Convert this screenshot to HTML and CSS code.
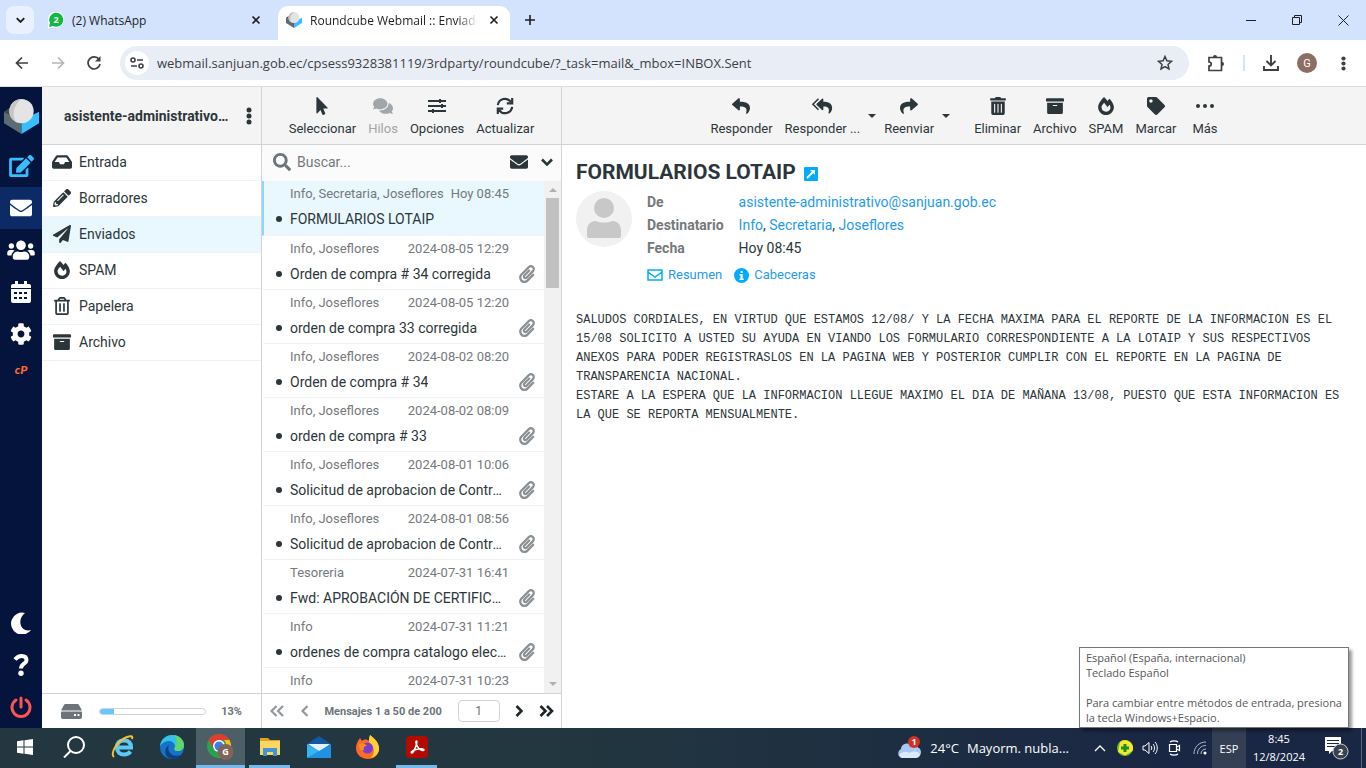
FILE: index.html
```html
<!DOCTYPE html>
<html lang="es">
<head>
    <meta charset="UTF-8">
    <meta name="viewport" content="width=device-width, initial-scale=1.0">
    <title>Roundcube Webmail :: Enviados</title>
    <link rel="stylesheet" href="styles.css">
</head>
<body>
    <!-- Shared icons -->
    <svg class="sprite" aria-hidden="true">
        <symbol id="i-cube" viewBox="0 0 36 36">
            <path fill="#5d6b72" d="M0 13v12l18 11V22z"/>
            <path fill="#37beff" d="M36 13v12L18 36V22z"/>
            <path fill="#3d4a50" d="M0 13l6-4 12 13z"/>
            <circle cx="18" cy="12.500" r="12.500" fill="#e4e4e4"/>
            <path fill="#c6c6c6" d="M18 0a12.500 12.500 0 0 0-6 23.500C8 16 10 6 18 0z"/>
        </symbol>
        <symbol id="i-edit" viewBox="0 0 576 512"><path d="M402.6 83.2l90.2 90.2c3.8 3.8 3.8 10 0 13.8L274.4 405.6l-92.8 10.3c-12.4 1.4-22.9-9.1-21.5-21.5l10.3-92.8L388.8 83.2c3.8-3.8 10-3.8 13.8 0zm162-22.9l-48.8-48.8c-15.2-15.2-39.9-15.2-55.2 0l-35.4 35.4c-3.8 3.8-3.8 10 0 13.8l90.2 90.2c3.8 3.8 10 3.8 13.8 0l35.4-35.4c15.2-15.3 15.2-40 0-55.2zM384 346.2V448H64V128h229.8c3.2 0 6.2-1.300 8.500-3.500l40-40c7.600-7.600 2.200-20.500-8.500-20.500H48C21.500 64 0 85.500 0 112v352c0 26.500 21.500 48 48 48h352c26.500 0 48-21.500 48-48V306.200c0-10.700-12.900-16-20.500-8.500l-40 40c-2.200 2.300-3.500 5.300-3.500 8.500z"/></symbol>
        <symbol id="i-mail" viewBox="0 0 512 512"><path d="M502.3 190.8c3.9-3.1 9.7-.2 9.7 4.7V400c0 26.5-21.5 48-48 48H48c-26.5 0-48-21.5-48-48V195.6c0-5 5.7-7.8 9.7-4.7 22.4 17.4 52.1 39.500 154.100 113.600 21.100 15.400 56.700 47.800 92.200 47.600 35.700.3 72-32.800 92.300-47.600 102-74.100 131.600-96.300 154-113.700zM256 320c23.200.4 56.600-29.200 73.400-41.400 132.700-96.300 142.800-104.700 173.400-128.700 5.800-4.500 9.200-11.500 9.200-18.900v-19c0-26.500-21.500-48-48-48H48c-26.500 0-48 21.500-48 48v19c0 7.400 3.400 14.300 9.200 18.900 30.600 23.900 40.700 32.400 173.400 128.700 16.800 12.200 50.200 41.800 73.400 41.400z"/></symbol>
        <symbol id="i-users" viewBox="0 0 640 512"><path d="M96 224c35.3 0 64-28.7 64-64s-28.7-64-64-64-64 28.7-64 64 28.7 64 64 64zm448 0c35.3 0 64-28.7 64-64s-28.7-64-64-64-64 28.7-64 64 28.7 64 64 64zm32 32h-64c-17.6 0-33.5 7.1-45.1 18.6 40.3 22.1 68.9 62 75.1 109.4h66c17.700 0 32-14.300 32-32v-32c0-35.300-28.700-64-64-64zm-256 0c61.900 0 112-50.100 112-112S381.900 32 320 32 208 82.100 208 144s50.100 112 112 112zm76.800 32h-8.300c-20.800 10-43.900 16-68.500 16s-47.600-6-68.500-16h-8.300C179.600 288 128 339.600 128 403.200V432c0 26.500 21.500 48 48 48h288c26.500 0 48-21.500 48-48v-28.800c0-63.600-51.600-115.200-115.200-115.200zm-223.700-13.400C161.500 263.100 145.600 256 128 256H64c-35.300 0-64 28.700-64 64v32c0 17.700 14.300 32 32 32h65.900c6.300-47.400 34.900-87.300 75.200-109.400z"/></symbol>
        <symbol id="i-calendar" viewBox="0 0 20 22"><path fill-rule="evenodd" d="M4 0h3v3h6V0h3v3h2a2 2 0 0 1 2 2v2H0V5a2 2 0 0 1 2-2h2zM0 8h20v12a2 2 0 0 1-2 2H2a2 2 0 0 1-2-2zm3 3v2h3v-2zm5 0v2h3v-2zm5 0v2h3v-2zM3 16v2h3v-2zm5 0v2h3v-2zm5 0v2h3v-2z"/></symbol>
        <symbol id="i-cog" viewBox="0 0 512 512"><path d="M487.4 315.7l-42.6-24.6c4.3-23.2 4.3-47 0-70.2l42.6-24.6c4.9-2.8 7.1-8.6 5.5-14-11.1-35.6-30-67.8-54.7-94.6-3.8-4.1-10-5.1-14.8-2.3L380.800 110c-17.900-15.400-38.500-27.300-60.800-35.100V25.800c0-5.600-3.900-10.500-9.400-11.700-36.700-8.200-74.300-7.800-109.200 0-5.500 1.200-9.400 6.100-9.400 11.700V75c-22.200 7.900-42.800 19.800-60.800 35.100L88.700 85.500c-4.900-2.800-11-1.900-14.800 2.300-24.700 26.700-43.600 58.900-54.700 94.600-1.700 5.400.6 11.200 5.500 14L67.300 221c-4.300 23.200-4.300 47 0 70.200l-42.600 24.600c-4.900 2.800-7.100 8.600-5.500 14 11.100 35.600 30 67.800 54.700 94.600 3.800 4.100 10 5.100 14.800 2.300l42.600-24.600c17.900 15.400 38.500 27.300 60.800 35.100v49.200c0 5.600 3.900 10.500 9.400 11.700 36.700 8.200 74.300 7.800 109.200 0 5.500-1.200 9.400-6.100 9.400-11.700v-49.200c22.200-7.900 42.800-19.800 60.800-35.100l42.600 24.600c4.900 2.800 11 1.900 14.800-2.300 24.700-26.700 43.600-58.900 54.700-94.600 1.500-5.500-.7-11.300-5.600-14.100zM256 336c-44.100 0-80-35.900-80-80s35.900-80 80-80 80 35.900 80 80-35.900 80-80 80z"/></symbol>
        <symbol id="i-moon" viewBox="0 0 20 22"><path d="M14 1A11 11 0 1 0 20 18C10 21 5 8 14 1z"/></symbol>
        <symbol id="i-help" viewBox="0 0 16 22"><path fill="none" stroke="currentColor" stroke-width="4" d="M2 5.500C4 3 6 2 8.500 2 12 2 13.500 4 13.500 6.300 13.500 10 8 9.500 8 14.500"/><circle cx="8" cy="19.300" r="2.700"/></symbol>
        <symbol id="i-power" viewBox="0 0 22 22"><path fill="none" stroke="currentColor" stroke-width="3" stroke-linecap="round" d="M11 2v9M6 4a9 9 0 1 0 10 0"/></symbol>
        <symbol id="i-inbox" viewBox="0 0 576 512"><path d="M567.938 243.908L462.25 85.374A48.003 48.003 0 0 0 422.311 64H153.689a48 48 0 0 0-39.938 21.374L8.062 243.908A47.994 47.994 0 0 0 0 270.533V400c0 26.510 21.490 48 48 48h480c26.510 0 48-21.490 48-48V270.533a47.994 47.994 0 0 0-8.062-26.625zM162.252 128h251.497l85.333 128H376l-32 64H232l-32-64H76.918l85.334-128z"/></symbol>
        <symbol id="i-pencil" viewBox="0 0 512 512"><path d="M497.9 142.1l-46.1 46.1c-4.7 4.7-12.3 4.7-17 0l-111-111c-4.7-4.7-4.7-12.3 0-17l46.1-46.1c18.7-18.7 49.1-18.7 67.9 0l60.1 60.1c18.8 18.7 18.8 49.1 0 67.900zM284.200 99.800L21.600 362.400.4 483.900c-2.900 16.400 11.400 30.600 27.800 27.800l121.500-21.300 262.600-262.600c4.700-4.700 4.700-12.300 0-17l-111-111c-4.800-4.700-12.400-4.700-17.100 0zM124.100 339.900c-5.500-5.500-5.500-14.300 0-19.800l154-154c5.500-5.500 14.300-5.500 19.800 0s5.500 14.300 0 19.800l-154 154c-5.500 5.500-14.300 5.500-19.800 0zM88 424h48v36.300l-64.500 11.300-31.100-31.100L51.700 376H88v48z"/></symbol>
        <symbol id="i-plane" viewBox="0 0 512 512"><path d="M476 3.2L12.5 270.600c-18.100 10.400-15.800 35.600 2.200 43.200L121 358.400l287.300-253.200c5.500-4.900 13.300 2.600 8.600 8.300L176 407v80.500c0 23.600 28.500 32.900 42.500 15.800L282 426l124.600 52.200c14.200 6 30.400-2.900 33-18.200l72-432C515 7.800 493.300-6.800 476 3.200z"/></symbol>
        <symbol id="i-fire" viewBox="0 0 448 512"><path d="M323.560 51.200c-20.800 19.300-39.580 39.590-56.220 59.970C240.080 73.620 206.280 35.530 168 0 69.740 91.170 0 209.960 0 281.600 0 408.850 100.290 512 224 512s224-103.150 224-230.400c0-53.270-51.980-163.140-124.440-230.400zm-19.470 340.650C282.430 407.010 255.720 416 226.860 416 154.710 416 96 368.260 96 290.750c0-38.610 24.310-72.630 72.790-130.750 6.930 7.980 98.830 125.340 98.830 125.340l58.630-66.880c4.140 6.850 7.910 13.550 11.270 19.970 27.350 52.190 15.810 118.970-33.430 153.420z"/></symbol>
        <symbol id="i-trash-o" viewBox="0 0 448 512"><path d="M268 416h24a12 12 0 0 0 12-12V188a12 12 0 0 0-12-12h-24a12 12 0 0 0-12 12v216a12 12 0 0 0 12 12zM432 80h-82.410l-34-56.700A48 48 0 0 0 274.410 0H173.590a48 48 0 0 0-41.160 23.300L98.410 80H16A16 16 0 0 0 0 96v16a16 16 0 0 0 16 16h16v336a48 48 0 0 0 48 48h288a48 48 0 0 0 48-48V128h16a16 16 0 0 0 16-16V96a16 16 0 0 0-16-16zM171.840 50.910A6 6 0 0 1 177 48h94a6 6 0 0 1 5.150 2.910L293.610 80H154.390zM368 464H80V128h288zm-212-48h24a12 12 0 0 0 12-12V188a12 12 0 0 0-12-12h-24a12 12 0 0 0-12 12v216a12 12 0 0 0 12 12z"/></symbol>
        <symbol id="i-trash" viewBox="0 0 448 512"><path d="M32 464a48 48 0 0 0 48 48h288a48 48 0 0 0 48-48V128H32zm272-256a16 16 0 0 1 32 0v224a16 16 0 0 1-32 0zm-96 0a16 16 0 0 1 32 0v224a16 16 0 0 1-32 0zm-96 0a16 16 0 0 1 32 0v224a16 16 0 0 1-32 0zM432 32H312l-9.400-18.700A24 24 0 0 0 281.100 0H166.800a23.720 23.720 0 0 0-21.400 13.300L136 32H16A16 16 0 0 0 0 48v32a16 16 0 0 0 16 16h416a16 16 0 0 0 16-16V48a16 16 0 0 0-16-16z"/></symbol>
        <symbol id="i-archive" viewBox="0 0 512 512"><path d="M32 448c0 17.700 14.300 32 32 32h384c17.700 0 32-14.300 32-32V160H32v288zm160-212c0-6.600 5.400-12 12-12h104c6.600 0 12 5.400 12 12v8c0 6.600-5.400 12-12 12H204c-6.600 0-12-5.400-12-12v-8zM480 32H32C14.300 32 0 46.300 0 64v48c0 8.800 7.200 16 16 16h480c8.800 0 16-7.200 16-16V64c0-17.700-14.300-32-32-32z"/></symbol>
        <symbol id="i-tag" viewBox="0 0 512 512"><path d="M0 252.118V48C0 21.490 21.490 0 48 0h204.118a48 48 0 0 1 33.941 14.059l211.882 211.882c18.745 18.745 18.745 49.137 0 67.882L293.823 497.941c-18.745 18.745-49.137 18.745-67.882 0L14.059 286.059A48 48 0 0 1 0 252.118zM112 64c-26.510 0-48 21.490-48 48s21.490 48 48 48 48-21.490 48-48-21.490-48-48-48z"/></symbol>
        <symbol id="i-search" viewBox="0 0 512 512"><path d="M505 442.700L405.300 343c-4.500-4.500-10.600-7-17-7H372c27.600-35.300 44-79.700 44-128C416 93.100 322.900 0 208 0S0 93.100 0 208s93.100 208 208 208c48.300 0 92.700-16.400 128-44v16.300c0 6.400 2.500 12.500 7 17l99.700 99.700c9.400 9.400 24.600 9.400 33.900 0l28.300-28.300c9.400-9.400 9.400-24.600.1-34zM208 336c-70.700 0-128-57.200-128-128 0-70.700 57.200-128 128-128 70.700 0 128 57.200 128 128 0 70.700-57.200 128-128 128z"/></symbol>
        <symbol id="i-comments" viewBox="0 0 576 512"><path d="M416 192c0-88.400-93.100-160-208-160S0 103.600 0 192c0 34.300 14.100 65.900 38 92-13.400 30.200-35.500 54.200-35.800 54.500-2.200 2.300-2.800 5.700-1.500 8.700S4.800 352 8 352c36.600 0 66.900-12.300 88.700-25 32.200 15.700 70.300 25 111.300 25 114.900 0 208-71.600 208-160zm122 220c23.900-26 38-57.700 38-92 0-66.900-53.500-124.200-129.300-148.100.9 6.600 1.300 13.300 1.300 20.100 0 105.900-107.700 192-240 192-10.800 0-21.300-.8-31.700-1.900C207.800 439.600 281.800 480 368 480c41 0 79.100-9.200 111.300-25 21.800 12.700 52.100 25 88.700 25 3.200 0 6.100-1.900 7.300-4.800 1.300-2.900.7-6.300-1.500-8.700-.3-.3-22.400-24.200-35.800-54.500z"/></symbol>
        <symbol id="i-pointer" viewBox="0 0 320 512"><path d="M302.189 329.126H196.105l55.831 135.993c3.889 9.428-.555 19.999-9.444 23.999l-49.165 21.427c-9.165 4-19.443-.571-23.332-9.714l-53.053-129.136-86.664 89.138C18.729 472.710 0 463.554 0 447.977V18.299C0 1.899 19.921-6.096 30.277 5.443l284.412 292.542c11.472 11.179 3.007 31.141-12.500 31.141z"/></symbol>
        <symbol id="i-sliders" viewBox="0 0 20 18"><path d="M1 3h18v2H1zM1 8h18v2H1zM1 13h18v2H1zM12 2h2v4h-2zM14 7h2v4h-2zM5 12h2v4H5z"/></symbol>
        <symbol id="i-sync" viewBox="0 0 20 20"><path fill="none" stroke="currentColor" stroke-width="2.400" d="M2 9a8 8 0 0 1 14.500-3.500M18 11a8 8 0 0 1-14.500 3.500M18 1v6h-6M2 19v-6h6"/></symbol>
        <symbol id="i-clip" viewBox="0 0 448 512"><path d="M43.246 466.142c-58.430-60.289-57.341-157.511 1.386-217.581L254.392 34c44.316-45.332 116.351-45.336 160.671 0 43.890 44.894 43.943 117.329 0 162.276L232.214 383.128c-29.855 30.537-78.633 30.111-107.982-.998-28.275-29.970-27.368-77.473 1.452-106.953l143.743-146.835c6.182-6.314 16.312-6.422 22.626-.241l22.861 22.379c6.315 6.182 6.422 16.312.241 22.626L171.427 319.927c-4.932 5.045-5.236 13.428-.648 18.292 4.372 4.634 11.245 4.711 15.688.165l182.849-186.851c19.613-20.062 19.613-52.725-.011-72.798-19.189-19.627-49.957-19.637-69.154 0L90.390 293.295c-34.763 35.560-35.299 93.120-1.191 128.313 34.010 35.093 88.985 35.137 123.058.286l172.060-175.999c6.177-6.319 16.307-6.433 22.626-.256l22.877 22.364c6.319 6.177 6.434 16.307.256 22.626l-172.060 175.998c-59.576 60.938-155.943 60.216-214.770-.485z"/></symbol>
        <symbol id="i-reply" viewBox="0 0 512 512"><path d="M8.309 189.836L184.313 37.851C199.719 24.546 224 35.347 224 56.015v80.053c160.629 1.839 288 34.032 288 186.258 0 61.441-39.581 122.309-83.333 154.132-13.653 9.931-33.111-2.533-28.077-18.631 45.344-145.012-21.507-183.510-176.590-185.742V360c0 20.700-24.300 31.453-39.687 18.164l-176.004-152c-11.071-9.562-11.086-26.753 0-36.328z"/></symbol>
        <symbol id="i-reply-all" viewBox="0 0 576 512"><path d="M136 190L290 50c14-12 36-3 36 16v72c140 4 250 40 250 180 0 60-36 116-76 148-14 10-32-3-27-18 40-134-14-174-147-178v82c0 20-22 30-36 18L136 226c-10-10-10-26 0-36z"/><path fill="none" stroke="currentColor" stroke-width="44" d="M188 50L30 206l158 156"/></symbol>
        <symbol id="i-ellipsis" viewBox="0 0 18 4"><circle cx="2" cy="2" r="2"/><circle cx="9" cy="2" r="2"/><circle cx="16" cy="2" r="2"/></symbol>
        <symbol id="i-dots" viewBox="0 0 6 18"><circle cx="3" cy="3" r="2.500"/><circle cx="3" cy="9" r="2.500"/><circle cx="3" cy="15" r="2.500"/></symbol>
        <symbol id="i-caret" viewBox="0 0 8 4"><path d="M0 0h8L4 4z"/></symbol>
        <symbol id="i-chev-down" viewBox="0 0 12 8"><path fill="none" stroke="currentColor" stroke-width="2.600" d="M1 1.500l5 5 5-5"/></symbol>
        <symbol id="i-chev-right" viewBox="0 0 8 12"><path fill="none" stroke="currentColor" stroke-width="2.600" d="M1.500 1l5 5-5 5"/></symbol>
        <symbol id="i-chevs-right" viewBox="0 0 15 12"><path fill="none" stroke="currentColor" stroke-width="2.600" d="M1.500 1l5 5-5 5M8 1l5 5-5 5"/></symbol>
        <symbol id="i-chev-left" viewBox="0 0 8 12"><path fill="none" stroke="currentColor" stroke-width="2.200" d="M6.500 1l-5 5 5 5"/></symbol>
        <symbol id="i-chevs-left" viewBox="0 0 15 12"><path fill="none" stroke="currentColor" stroke-width="2.200" d="M6.500 1l-5 5 5 5M13 1L8 6l5 5"/></symbol>
        <symbol id="i-hdd" viewBox="0 0 21 15"><path fill-rule="evenodd" d="M5 0h11a2 2 0 0 1 2 1l3 5.500H0L3 1a2 2 0 0 1 2-1zM0 8.500A1 1 0 0 1 1 7.500h19a1 1 0 0 1 1 1V13a2 2 0 0 1-2 2H2a2 2 0 0 1-2-2zM13 10v2h2v-2zm3.500 0v2h2v-2z"/></symbol>
        <symbol id="i-close" viewBox="0 0 10 10"><path fill="none" stroke="currentColor" stroke-width="1.600" d="M1.500 1.500l7 7M8.500 1.500l-7 7"/></symbol>
        <symbol id="i-arrow" viewBox="0 0 14 14"><path fill="none" stroke="currentColor" stroke-width="1.700" d="M13 7H2M7 1.500L1.500 7 7 12.500"/></symbol>
    </svg>

    <!-- Browser tabs -->
    <header class="tab-strip">
        <button class="tab-search" aria-label="Buscar pestañas"><svg width="9" height="6"><use href="#i-chev-down"/></svg></button>
        <div class="tab">
            <svg width="16" height="16" viewBox="0 0 16 16"><path fill="#fff" d="M0 16V7a8 8 0 1 1 8 8.500z"/><path fill="#12b83f" d="M1 15l1-4a7 7 0 1 1 3 3z"/><text x="8" y="11" text-anchor="middle" class="badge-text">2</text></svg>
            <span class="tab-title">(2) WhatsApp</span>
            <button class="tab-close" aria-label="Cerrar"><svg width="10" height="10"><use href="#i-close"/></svg></button>
        </div>
        <div class="tab active">
            <svg width="16" height="16"><use href="#i-cube"/></svg>
            <span class="tab-title">Roundcube Webmail :: Enviados</span>
            <button class="tab-close" aria-label="Cerrar"><svg width="10" height="10"><use href="#i-close"/></svg></button>
        </div>
        <button class="tab-new" aria-label="Nueva pestaña"><svg width="12" height="12" viewBox="0 0 12 12"><path fill="none" stroke="currentColor" stroke-width="1.600" d="M6 1v10M1 6h10"/></svg></button>
        <div class="window-buttons">
            <button aria-label="Minimizar"><svg width="10" height="10" viewBox="0 0 10 10"><path stroke="currentColor" d="M0 5.500h10"/></svg></button>
            <button aria-label="Restaurar"><svg width="10" height="10" viewBox="0 0 10 10"><path fill="none" stroke="currentColor" d="M.5 2.500h7v7h-7zM2.500 2.500v-2h7v7h-2"/></svg></button>
            <button aria-label="Cerrar ventana"><svg width="11" height="11" viewBox="0 0 11 11"><path fill="none" stroke="currentColor" d="M.5.5l10 10M10.500.5l-10 10"/></svg></button>
        </div>
    </header>

    <!-- Browser toolbar -->
    <div class="address-row">
        <button class="nav-btn" aria-label="Atrás"><svg width="14" height="14"><use href="#i-arrow"/></svg></button>
        <button class="nav-btn forward" aria-label="Adelante" disabled><svg width="14" height="14"><use href="#i-arrow"/></svg></button>
        <button class="nav-btn" aria-label="Recargar"><svg width="14" height="14" viewBox="0 0 14 14"><path fill="none" stroke="currentColor" stroke-width="1.700" d="M12 3.500A6 6 0 1 0 13 8"/><path d="M13.500 0v5.500H8z"/></svg></button>
        <div class="omnibox">
            <button class="site-info" aria-label="Información del sitio"><svg width="14" height="12" viewBox="0 0 14 12"><g fill="none" stroke="currentColor" stroke-width="1.600"><circle cx="3" cy="3" r="2"/><path d="M7 3h6M1 9h6"/><circle cx="11" cy="9" r="2"/></g></svg></button>
            <input class="url" type="text" aria-label="Dirección" value="webmail.sanjuan.gob.ec/cpsess9328381119/3rdparty/roundcube/?_task=mail&amp;_mbox=INBOX.Sent">
            <button class="star" aria-label="Favorito"><svg width="16" height="16" viewBox="0 0 16 16"><path fill="none" stroke="currentColor" stroke-width="1.500" d="M8 1.500l1.900 4.300 4.600.5-3.500 3.100 1 4.600-4-2.400-4 2.400 1-4.600L1.500 6.300l4.600-.5z"/></svg></button>
        </div>
        <div class="browser-actions">
            <button aria-label="Extensiones"><svg width="18" height="18" viewBox="0 0 18 18"><path fill="none" stroke="currentColor" stroke-width="1.700" d="M2 3.500h12.500v13H2v-4.500c3 0 3-4 0-4z"/><path d="M6 3a2 2 0 0 1 4 0zM15 8a2 2 0 0 1 0 4z"/></svg></button>
            <span class="divider"></span>
            <button aria-label="Descargas"><svg width="16" height="16" viewBox="0 0 16 16"><path fill="none" stroke="currentColor" stroke-width="1.900" d="M8 0v10M3.500 6L8 10.500 12.500 6M1 11v4h14v-4"/></svg></button>
            <button class="profile" aria-label="Perfil">G</button>
            <button aria-label="Menú"><svg width="5" height="15"><use href="#i-dots"/></svg></button>
        </div>
    </div>

    <!-- Webmail -->
    <div class="webmail">
        <nav class="taskmenu">
            <a href="#" class="logo" aria-label="Roundcube"><svg width="35" height="35"><use href="#i-cube"/></svg></a>
            <a href="#" class="compose" aria-label="Redactar"><svg width="25" height="22"><use href="#i-edit"/></svg></a>
            <a href="#" class="selected" aria-label="Correo"><svg width="22" height="22"><use href="#i-mail"/></svg></a>
            <a href="#" aria-label="Contactos"><svg width="28" height="22"><use href="#i-users"/></svg></a>
            <a href="#" aria-label="Calendario"><svg width="20" height="22"><use href="#i-calendar"/></svg></a>
            <a href="#" aria-label="Configuración"><svg width="22" height="22"><use href="#i-cog"/></svg></a>
            <a href="#" class="cpanel" aria-label="cPanel">cP</a>
            <span class="spacer"></span>
            <a href="#" aria-label="Modo oscuro"><svg width="20" height="22"><use href="#i-moon"/></svg></a>
            <a href="#" aria-label="Ayuda"><svg width="16" height="22"><use href="#i-help"/></svg></a>
            <a href="#" class="logout" aria-label="Salir"><svg width="22" height="22"><use href="#i-power"/></svg></a>
        </nav>

        <aside class="folders">
            <div class="pane-header account">
                <span class="account-name">asistente-administrativo@sanjuan.gob.ec</span>
                <button aria-label="Acciones de carpeta"><svg width="6" height="18"><use href="#i-dots"/></svg></button>
            </div>
            <ul class="folder-list">
                <li><a href="#"><svg width="20" height="18"><use href="#i-inbox"/></svg>Entrada</a></li>
                <li><a href="#"><svg width="20" height="18"><use href="#i-pencil"/></svg>Borradores</a></li>
                <li class="selected"><a href="#"><svg width="20" height="18"><use href="#i-plane"/></svg>Enviados</a></li>
                <li><a href="#"><svg width="20" height="18"><use href="#i-fire"/></svg>SPAM</a></li>
                <li><a href="#"><svg width="20" height="18"><use href="#i-trash-o"/></svg>Papelera</a></li>
                <li><a href="#"><svg width="20" height="18"><use href="#i-archive"/></svg>Archivo</a></li>
            </ul>
            <div class="pane-footer quota">
                <svg width="21" height="15"><use href="#i-hdd"/></svg>
                <div class="quota-bar"><div class="quota-value" style="width: 13%"></div></div>
                <span>13%</span>
            </div>
        </aside>

        <section class="messages">
            <div class="pane-header toolbar">
                <button><svg width="20" height="18"><use href="#i-pointer"/></svg>Seleccionar</button>
                <button disabled><svg width="20" height="18"><use href="#i-comments"/></svg>Hilos</button>
                <button><svg width="20" height="18"><use href="#i-sliders"/></svg>Opciones</button>
                <button><svg width="20" height="18"><use href="#i-sync"/></svg>Actualizar</button>
            </div>
            <div class="searchbar">
                <svg width="18" height="18"><use href="#i-search"/></svg>
                <input type="text" placeholder="Buscar..." aria-label="Buscar">
                <button aria-label="No leídos"><svg width="18" height="18"><use href="#i-mail"/></svg></button>
                <button aria-label="Opciones de búsqueda"><svg width="12" height="8"><use href="#i-chev-down"/></svg></button>
            </div>
            <div class="list-scroller">
                <ul class="message-list">
                    <li class="selected">
                        <div class="meta"><span>Info, Secretaria, Joseflores</span><time>Hoy 08:45</time></div>
                        <a class="subject" href="#"><span>FORMULARIOS LOTAIP</span></a>
                    </li>
                    <li>
                        <div class="meta"><span>Info, Joseflores</span><time>2024-08-05 12:29</time></div>
                        <a class="subject" href="#"><span>Orden de compra # 34 corregida</span></a>
                        <svg class="clip"><use href="#i-clip"/></svg>
                    </li>
                    <li>
                        <div class="meta"><span>Info, Joseflores</span><time>2024-08-05 12:20</time></div>
                        <a class="subject" href="#"><span>orden de compra 33 corregida</span></a>
                        <svg class="clip"><use href="#i-clip"/></svg>
                    </li>
                    <li>
                        <div class="meta"><span>Info, Joseflores</span><time>2024-08-02 08:20</time></div>
                        <a class="subject" href="#"><span>Orden de compra # 34</span></a>
                        <svg class="clip"><use href="#i-clip"/></svg>
                    </li>
                    <li>
                        <div class="meta"><span>Info, Joseflores</span><time>2024-08-02 08:09</time></div>
                        <a class="subject" href="#"><span>orden de compra # 33</span></a>
                        <svg class="clip"><use href="#i-clip"/></svg>
                    </li>
                    <li>
                        <div class="meta"><span>Info, Joseflores</span><time>2024-08-01 10:06</time></div>
                        <a class="subject" href="#"><span>Solicitud de aprobacion de Contratacion</span></a>
                        <svg class="clip"><use href="#i-clip"/></svg>
                    </li>
                    <li>
                        <div class="meta"><span>Info, Joseflores</span><time>2024-08-01 08:56</time></div>
                        <a class="subject" href="#"><span>Solicitud de aprobacion de Contratacion</span></a>
                        <svg class="clip"><use href="#i-clip"/></svg>
                    </li>
                    <li>
                        <div class="meta"><span>Tesoreria</span><time>2024-07-31 16:41</time></div>
                        <a class="subject" href="#"><span>Fwd: APROBACIÓN DE CERTIFICACION</span></a>
                        <svg class="clip"><use href="#i-clip"/></svg>
                    </li>
                    <li>
                        <div class="meta"><span>Info</span><time>2024-07-31 11:21</time></div>
                        <a class="subject" href="#"><span>ordenes de compra catalogo electronico</span></a>
                        <svg class="clip"><use href="#i-clip"/></svg>
                    </li>
                    <li>
                        <div class="meta"><span>Info</span><time>2024-07-31 10:23</time></div>
                    </li>
                </ul>
                <div class="scrollbar">
                    <svg class="scroll-up" width="8" height="4"><use href="#i-caret"/></svg>
                    <div class="scroll-thumb"></div>
                    <svg width="8" height="4"><use href="#i-caret"/></svg>
                </div>
            </div>
            <div class="pane-footer pager">
                <button disabled aria-label="Primera"><svg width="15" height="12"><use href="#i-chevs-left"/></svg></button>
                <button disabled aria-label="Anterior"><svg width="8" height="12"><use href="#i-chev-left"/></svg></button>
                <span class="count">Mensajes 1 a 50 de 200</span>
                <input type="text" value="1" aria-label="Página">
                <button aria-label="Siguiente"><svg width="8" height="12"><use href="#i-chev-right"/></svg></button>
                <button aria-label="Última"><svg width="15" height="12"><use href="#i-chevs-right"/></svg></button>
            </div>
        </section>

        <main class="reader">
            <div class="pane-header toolbar">
                <button><svg width="20" height="18"><use href="#i-reply"/></svg>Responder</button>
                <button><svg width="22" height="18"><use href="#i-reply-all"/></svg>Responder ...</button>
                <button class="drop" aria-label="Más respuestas"><svg width="8" height="4"><use href="#i-caret"/></svg></button>
                <button><svg class="flip" width="20" height="18"><use href="#i-reply"/></svg>Reenviar</button>
                <button class="drop" aria-label="Más reenvíos"><svg width="8" height="4"><use href="#i-caret"/></svg></button>
                <button class="group"><svg width="20" height="18"><use href="#i-trash"/></svg>Eliminar</button>
                <button><svg width="20" height="18"><use href="#i-archive"/></svg>Archivo</button>
                <button><svg width="20" height="18"><use href="#i-fire"/></svg>SPAM</button>
                <button><svg width="20" height="18"><use href="#i-tag"/></svg>Marcar</button>
                <button class="more"><svg width="18" height="18"><use href="#i-ellipsis"/></svg>Más</button>
            </div>
            <article class="message">
                <h1>FORMULARIOS LOTAIP
                    <a href="#" aria-label="Abrir en ventana nueva"><svg width="14" height="14" viewBox="0 0 14 14"><rect width="14" height="14" rx="1"/><path fill="none" stroke="#fff" stroke-width="2" d="M3 11l6-6"/><path fill="#fff" d="M6 3h5v5z"/></svg></a>
                </h1>
                <div class="message-info">
                    <svg class="avatar" viewBox="0 0 56 56"><circle cx="28" cy="28" r="28" fill="#f1f1f1"/><circle cx="28" cy="17" r="10" fill="#c8c8c8"/><path fill="#c8c8c8" d="M11 45v-5c0-7 4-10 9-10 5 2 11 2 16 0 5 0 9 3 9 10v5a2 2 0 0 1-2 2H13a2 2 0 0 1-2-2z"/></svg>
                    <div>
                        <table class="fields">
                            <tr><th scope="row">De</th><td><a href="#">asistente-administrativo@sanjuan.gob.ec</a></td></tr>
                            <tr><th scope="row">Destinatario</th><td><a href="#">Info</a>, <a href="#">Secretaria</a>, <a href="#">Joseflores</a></td></tr>
                            <tr><th scope="row">Fecha</th><td>Hoy 08:45</td></tr>
                        </table>
                        <div class="header-links">
                            <a href="#"><svg width="16" height="12" viewBox="0 0 16 12"><path fill="none" stroke="currentColor" stroke-width="1.500" d="M1 1h14v10H1zM1 3l7 5 7-5"/></svg>Resumen</a>
                            <a href="#"><svg width="15" height="15" viewBox="0 0 15 15"><circle cx="7.500" cy="7.500" r="7.500"/><path fill="#fff" d="M6.500 3h2.200v2H6.500zM5.500 6h3.200v4.500h1V12h-4.200v-1.500h1v-3h-1z"/></svg>Cabeceras</a>
                        </div>
                    </div>
                </div>
                <div class="message-body">
                    <p>SALUDOS CORDIALES, EN VIRTUD QUE ESTAMOS 12/08/ Y LA FECHA MAXIMA PARA EL REPORTE DE LA INFORMACION ES EL 15/08 SOLICITO A USTED SU AYUDA EN VIANDO LOS FORMULARIO CORRESPONDIENTE A LA LOTAIP Y SUS RESPECTIVOS ANEXOS PARA PODER REGISTRASLOS EN LA PAGINA WEB Y POSTERIOR CUMPLIR CON EL REPORTE EN LA PAGINA DE TRANSPARENCIA NACIONAL.</p>
                    <p>ESTARE A LA ESPERA QUE LA INFORMACION LLEGUE MAXIMO EL DIA DE MAÑANA 13/08, PUESTO QUE ESTA INFORMACION ES LA QUE SE REPORTA MENSUALMENTE.</p>
                </div>
            </article>
        </main>
    </div>

    <!-- Windows taskbar -->
    <footer class="taskbar">
        <div class="apps">
            <button aria-label="Inicio"><svg width="16" height="16" viewBox="0 0 16 16"><path fill="#fff" d="M0 2.200l6.500-.9v6.200H0zM7.500 1.200L16 0v7.500H7.500zM0 8.500h6.500v6.200L0 13.800zM7.500 8.500H16V16l-8.500-1.200z"/></svg></button>
            <button aria-label="Buscar"><svg width="22" height="22" viewBox="0 0 22 22"><g fill="none" stroke="#fff" stroke-width="2"><circle cx="13" cy="9" r="8"/><path d="M7.500 15L1 21.500"/></g></svg></button>
            <button aria-label="Internet Explorer"><svg width="24" height="24" viewBox="0 0 24 24"><path fill="none" stroke="#5cc8f5" stroke-width="4" d="M6 12.500h14C20 8 17.500 5.500 13 5.500S6 8 6 12.500 9 19.500 13 19.500c3 0 5-1 6.500-3"/><path fill="none" stroke="#f2c230" stroke-width="2" d="M3 22C-1 18 6 6 16 2c4-1.500 6-1 5 2"/></svg></button>
            <button aria-label="Edge"><svg width="24" height="24" viewBox="0 0 24 24"><circle cx="12" cy="12" r="12" fill="#1674c8"/><path fill="#35c1e8" d="M0 11C1 4 6 0 12 0c7 0 12 5 12 10 0 4-3 6-6 6-4 0-4-2-3-4 0-4-3-6-6-6-4 0-7 2-9 5z"/><path fill="#61d66b" d="M14 0c6 1 10 5 10 10 0 4-3 6-6 6-4 0-4-2-3-4 3-3 2-8-1-12z"/><path fill="#0d3f86" d="M9 10c-3 6 3 13 12 10-3 4-8 5-12 3-5-3-5-10 0-13z"/></svg></button>
            <button class="current" aria-label="Chrome"><svg width="27" height="26" viewBox="0 0 27 26"><circle cx="12" cy="12" r="12" fill="#2ba24c"/><path fill="#e33b2e" d="M1.600 6A12 12 0 0 1 22.400 6H12a6 6 0 0 0-5 9z"/><path fill="#fbc116" d="M22.400 6A12 12 0 0 1 12 24l5-9a6 6 0 0 0 0-9z"/><circle cx="12" cy="12" r="6" fill="#fff"/><circle cx="12" cy="12" r="4.500" fill="#3b7ded"/><circle cx="18.500" cy="18" r="8" fill="#80645a"/><text x="18.500" y="21" text-anchor="middle" class="badge-text">G</text></svg></button>
            <button class="open" aria-label="Explorador de archivos"><svg width="22" height="20" viewBox="0 0 22 20"><path fill="#e6a317" d="M1 1h8l2 2h10v6H1z"/><path fill="#fbd667" d="M1 4h20v14H1z"/><path fill="#4295d1" d="M4 19v-8h14v8h-4v-4H8v4z"/></svg></button>
            <button aria-label="Correo"><svg width="24" height="22" viewBox="0 0 24 22"><path fill="#1259a5" d="M0 8l12-8 12 8v6H0z"/><path fill="#e3f2fc" d="M1 8h22l-10 8z"/><path fill="#36b5f0" d="M0 8l14 8-14 6z"/><path fill="#1f93e0" d="M24 8v14H0z"/></svg></button>
            <button aria-label="Firefox"><svg width="24" height="24" viewBox="0 0 24 24"><path fill="#ff6b26" d="M2 6l2-3 2 3c2-2 5-2 7 0l1-6c4 3 9 7 9 14 0 6-5 10-11 10S0 20 0 13c0-3 1-5 2-7z"/><path fill="#ffcf35" d="M14 0c4 3 10 8 9 15-1 4-4 7-8 8 4-5 4-11-1-14-2-3-1-6 0-9z"/><circle cx="11.500" cy="13" r="5.500" fill="#7a3dcc"/><path fill="#ff8c21" d="M3 9c3-1 6-1 8 2-3 0-4 2-3 4-3 1-6-2-5-6z"/></svg></button>
            <button class="open" aria-label="Adobe Acrobat"><svg width="22" height="22" viewBox="0 0 22 22"><rect width="22" height="22" rx="4" fill="#b30b00"/><path fill="none" stroke="#fff" stroke-width="1.500" d="M10.500 5c-1.500 0 0 5 2.500 7.500s5 2.500 5 1.200c0-1.700-10-.7-12.500 2-1 1.500 1 2 2-.2C9 13 12 5 10.500 5z"/></svg></button>
        </div>
        <div class="tray">
            <button class="weather">
                <svg width="26" height="24" viewBox="0 0 26 24"><path fill="#a9c8f4" d="M5 22a5 5 0 0 1 0-9c0-6 9-8 12-2 5-1 8 2 8 5s-2 6-5 6z"/><path fill="#dceafd" d="M3 19c4-5 9-3 11-2 3-2 7-2 10 1-1 3-3 4-5 4H6z"/><circle cx="18" cy="6" r="6" fill="#d13125"/><text x="18" y="9" text-anchor="middle" class="badge-text">1</text></svg>
                <span>24°C</span><span>Mayorm. nubla...</span>
            </button>
            <button aria-label="Iconos ocultos"><svg width="12" height="8" viewBox="0 0 12 8"><path fill="none" stroke="#fff" stroke-width="1.300" d="M1 7l5-5 5 5"/></svg></button>
            <button aria-label="Antivirus"><svg width="16" height="16" viewBox="0 0 16 16"><circle cx="8" cy="8" r="8" fill="#5bbd2d"/><path fill="#f5e82d" d="M3 2a8 8 0 0 1 12.500 9L8 15.500 1 12z"/><path fill="#1e8c2c" d="M6.500 4h3v2.500H12v3H9.500V12h-3V9.500H4v-3h2.500z"/></svg></button>
            <button aria-label="Volumen"><svg width="16" height="14" viewBox="0 0 16 14"><path fill="none" stroke="#fff" d="M1 5h2l4-3.500v11L3 9H1zM9 5c1 1 1 3 0 4M11 3c2 2 2 6 0 8M13 1c3 3 3 9 0 12"/></svg></button>
            <button aria-label="Cámara"><svg width="14" height="16" viewBox="0 0 14 16"><path fill="none" stroke="#fff" stroke-width="1.200" d="M1.500 4.500h7v7h-7zM8.500 7l3-1.500v5L8.500 9M2 2c2-1.500 6-1.500 8 0M2 14c2 1.500 6 1.500 8 0"/></svg></button>
            <button aria-label="Red"><svg width="14" height="14" viewBox="0 0 14 14"><g fill="none" stroke="#aeb8c8"><path d="M1 13C1 6 6 1 13 1M4.500 13c0-5 3.500-8.500 8.500-8.500M8 13c0-3 2-5 5-5"/></g><circle cx="12" cy="12" r="1.500" fill="#fff"/></svg></button>
            <button class="lang">ESP</button>
            <button class="clock"><span>8:45</span><span>12/8/2024</span></button>
            <button class="notifications" aria-label="Notificaciones"><svg width="24" height="24" viewBox="0 0 24 24"><path fill="#fff" d="M0 1h16v14H7l-3 3v-3H0z"/><path stroke="#1a2744" d="M2 4.500h12M2 7.500h12M2 10.500h8"/><circle cx="15.500" cy="15.500" r="7.500" fill="#3a4252" stroke="#c8ccd4"/><text x="15.500" y="19" text-anchor="middle" class="badge-text">2</text></svg></button>
        </div>
        <div class="tooltip" role="tooltip">
            <p>Español (España, internacional)<br>Teclado Español</p>
            <p>Para cambiar entre métodos de entrada, presiona<br>la tecla Windows+Espacio.</p>
        </div>
    </footer>
</body>
</html>
```
FILE: styles.css
```css
/* Reset and Base Styles */
* {
    margin: 0;
    padding: 0;
    box-sizing: border-box;
}

body {
    display: flex;
    flex-direction: column;
    height: 100vh;
    overflow: hidden;
    font-family: Roboto, sans-serif;
    font-size: 14px;
    color: #2c363a;
    background: #fff;
}

button, input {
    font: inherit;
    color: inherit;
    border: 0;
    background: none;
    outline: 0;
}

button {
    display: flex;
    align-items: center;
    justify-content: center;
}

a {
    color: inherit;
    text-decoration: none;
}

ul {
    list-style: none;
}

svg {
    fill: currentColor;
    flex-shrink: 0;
}

.sprite {
    position: absolute;
    width: 0;
    height: 0;
}

.badge-text {
    font-family: "Open Sans", sans-serif;
    font-size: 9px;
    font-weight: bold;
    fill: #fff;
}

/* Browser tabs */
.tab-strip {
    display: flex;
    align-items: flex-end;
    height: 40px;
    padding-left: 6px;
    background: #d3e3fd;
    font-family: "Open Sans", sans-serif;
    font-size: 12px;
    color: #1f1f1f;
}

.tab-search {
    width: 28px;
    height: 28px;
    margin-bottom: 6px;
    border-radius: 8px;
    background: #e9f0fe;
}

.tab {
    display: flex;
    align-items: center;
    gap: 8px;
    width: 232px;
    height: 34px;
    margin-left: 6px;
    padding: 0 8px 6px;
}

.tab.active {
    border-radius: 10px 10px 0 0;
    background: #fff;
}

.tab-title {
    flex: 1;
    overflow: hidden;
    white-space: nowrap;
}

.tab.active .tab-title {
    mask-image: linear-gradient(to right, #000 88%, transparent);
}

.tab-close {
    width: 16px;
    height: 16px;
}

.tab-new {
    width: 28px;
    height: 28px;
    margin: 0 0 6px 6px;
}

.window-buttons {
    display: flex;
    margin-left: auto;
}

.window-buttons button {
    width: 46px;
    height: 40px;
}

/* Address bar */
.address-row {
    display: flex;
    align-items: center;
    height: 47px;
    padding: 0 10px 0 4px;
    border-bottom: 1px solid #dadce0;
    color: #3c4043;
}

.nav-btn {
    width: 36px;
    height: 36px;
}

.forward {
    color: #b4b6b9;
    transform: scaleX(-1);
}

.omnibox {
    display: flex;
    flex: 1;
    align-items: center;
    height: 34px;
    margin-left: 8px;
    padding: 0 16px 0 5px;
    border-radius: 17px;
    background: #e9eef6;
}

.site-info {
    width: 24px;
    height: 24px;
    border-radius: 50%;
    background: #fff;
}

.url {
    flex: 1;
    padding-left: 8px;
    font-family: "Open Sans", sans-serif;
    font-size: 13px;
}

.browser-actions {
    display: flex;
    align-items: center;
    gap: 18px;
    padding: 0 10px 0 18px;
}

.browser-actions .profile {
    width: 20px;
    height: 20px;
    margin-right: 6px;
    border-radius: 50%;
    background: #8d6e63;
    color: #fff;
    font-size: 11px;
}

.divider {
    width: 2px;
    height: 16px;
    background: #d3e3fd;
}

/* Webmail layout */
.webmail {
    display: flex;
    flex: 1;
    min-height: 0;
}

.pane-header {
    height: 58px;
    flex-shrink: 0;
    border-bottom: 1px solid #ced4d8;
    background: #f4f4f4;
}

.pane-footer {
    display: flex;
    align-items: center;
    height: 35px;
    flex-shrink: 0;
    border-top: 1px solid #ced4d8;
    font-size: 11px;
    font-weight: bold;
    color: #6b7479;
}

/* Task menu */
.taskmenu {
    display: flex;
    flex-direction: column;
    width: 42px;
    background: #04143c;
    color: #fff;
}

.taskmenu a {
    display: flex;
    align-items: center;
    justify-content: center;
    height: 42px;
}

.taskmenu .logo {
    height: 58px;
}

.taskmenu .compose {
    color: #37beff;
}

.taskmenu .selected {
    background: #0c2a66;
}

.taskmenu .cpanel {
    height: 28px;
    color: #ff6c2c;
    font-family: Lato, sans-serif;
    font-size: 12px;
    font-style: italic;
    font-weight: 900;
}

.taskmenu .spacer {
    flex: 1;
}

.taskmenu .logout {
    color: #ff5552;
}

/* Folders */
.folders {
    display: flex;
    flex-direction: column;
    width: 220px;
    border-right: 1px solid #ced4d8;
}

.account {
    display: flex;
    align-items: center;
    justify-content: space-between;
    padding: 0 9px 0 22px;
}

.account-name {
    width: 165px;
    overflow: hidden;
    text-overflow: ellipsis;
    white-space: nowrap;
    font-weight: bold;
}

.folder-list {
    flex: 1;
}

.folder-list li {
    height: 36px;
    border-bottom: 1px solid #f0f2f3;
}

.folder-list a {
    display: flex;
    align-items: center;
    gap: 7px;
    height: 34px;
    padding-left: 10px;
}

.folder-list .selected {
    background: #e9f7fe;
}

.quota {
    padding: 0 19px;
}

.quota-bar {
    flex: 1;
    height: 7px;
    margin: 0 15px 0 17px;
    border: 1px solid #ced4d8;
    border-radius: 4px;
    overflow: hidden;
}

.quota-value {
    height: 100%;
    background: #66c8ff;
}

/* Toolbars */
.toolbar {
    display: flex;
    align-items: center;
    justify-content: center;
    gap: 12px;
    padding-top: 1px;
    font-size: 13px;
}

.toolbar button {
    flex-direction: column;
    gap: 6px;
    line-height: 15px;
    white-space: nowrap;
}

.toolbar button:disabled {
    color: #a0a6a9;
}

.toolbar .drop {
    width: 8px;
    margin: 0 -4px;
}

.toolbar .group {
    margin-left: 16px;
}

.toolbar .more {
    margin-left: 4px;
}

.flip {
    transform: scaleX(-1);
}

/* Message list */
.messages {
    display: flex;
    flex-direction: column;
    width: 300px;
    border-right: 1px solid #ced4d8;
}

.searchbar {
    display: flex;
    align-items: center;
    height: 36px;
    flex-shrink: 0;
    padding: 0 8px 2px 11px;
    background: #fbfbfb;
}

.searchbar > svg {
    color: #6b7479;
}

.searchbar input {
    flex: 1;
    min-width: 0;
    padding-left: 6px;
}

.searchbar input::placeholder {
    color: #75797c;
}

.searchbar button {
    margin-left: 13px;
}

.list-scroller {
    display: flex;
    flex: 1;
    min-height: 0;
    overflow: hidden;
}

.message-list {
    flex: 1;
    min-width: 0;
}

.message-list li {
    position: relative;
    height: 54px;
    padding: 4px 35px 0 26px;
    border-bottom: 1px solid #f0f2f3;
    border-left: 2px solid transparent;
}

.message-list .selected {
    height: 55px;
    border-left-color: #8fd6fb;
    background: #e9f7fe;
}

.meta {
    display: flex;
    justify-content: space-between;
    font-size: 13px;
    line-height: 18px;
    color: #75797c;
}

.subject {
    display: flex;
    align-items: center;
    height: 32px;
    margin-left: -14px;
}

.subject::before {
    content: "";
    width: 6px;
    height: 6px;
    margin-right: 8px;
    flex-shrink: 0;
    border-radius: 50%;
    background: #2c363a;
}

.subject span {
    overflow: hidden;
    text-overflow: ellipsis;
    white-space: nowrap;
}

.clip {
    position: absolute;
    right: 9px;
    bottom: 6px;
    width: 16px;
    height: 18px;
    color: #8a9093;
}

.scrollbar {
    display: flex;
    flex-direction: column;
    align-items: center;
    width: 17px;
    padding: 7px 0;
    background: #f1f1f1;
    color: #b0b0b0;
}

.scroll-up {
    transform: scaleY(-1);
}

.scroll-thumb {
    width: 13px;
    height: 90px;
    margin: 6px 0 auto;
    background: #c1c1c1;
}

.pager {
    justify-content: space-between;
    padding: 0 7px 0 8px;
}

.pager button {
    color: #1f2629;
}

.pager button:disabled {
    color: #92989b;
}

.pager input {
    width: 42px;
    height: 22px;
    border: 1px solid #ced4d8;
    border-radius: 4px;
    font-size: 12px;
    font-weight: normal;
    text-align: center;
}

/* Message reader */
.reader {
    flex: 1;
    min-width: 0;
}

.message {
    padding: 14px 14px 0;
}

.message h1 {
    font-size: 21px;
    line-height: 26px;
    font-weight: bold;
}

.message h1 a {
    margin-left: 3px;
    color: #00acff;
}

.message h1 svg {
    vertical-align: -2px;
}

.message-info {
    display: flex;
    gap: 15px;
    margin-top: 6px;
}

.avatar {
    width: 56px;
    height: 56px;
}

.fields {
    border-collapse: collapse;
    line-height: 23px;
}

.fields th {
    padding-right: 15px;
    text-align: left;
    color: #75797c;
}

.fields a, .header-links a {
    color: #1f9aef;
}

.header-links {
    display: flex;
    gap: 12px;
    margin-top: 7px;
    font-size: 13px;
    line-height: 16px;
}

.header-links a {
    display: flex;
    align-items: center;
    gap: 5px;
}

.header-links svg {
    color: #00acff;
}

.message-body {
    margin-top: 28px;
    font-family: "Liberation Mono", monospace;
    font-size: 12px;
    line-height: 19px;
}

/* Windows taskbar */
.taskbar {
    position: relative;
    display: flex;
    justify-content: space-between;
    height: 40px;
    flex-shrink: 0;
    background: linear-gradient(to right, #22373f 40%, #1a2744 85%);
    color: #fff;
    font-family: "Open Sans", sans-serif;
    font-size: 11px;
}

.apps, .tray {
    display: flex;
}

.apps button {
    width: 49px;
    border-bottom: 3px solid transparent;
}

.apps .current {
    border-bottom-color: #76b9ed;
    background: #4d5f66;
}

.apps .open {
    width: 41px;
    margin: 0 4px;
    border-bottom-color: #76b9ed;
}

.tray button {
    width: 25px;
}

.tray .weather {
    width: auto;
    gap: 8px;
    margin-right: 18px;
    font-size: 13px;
}

.tray .lang {
    width: 34px;
    background: #343f56;
}

.tray .clock {
    flex-direction: column;
    width: 66px;
    line-height: 18px;
}

.tray .notifications {
    width: 50px;
    margin-right: 4px;
    border-right: 1px solid #5d6678;
}

.tooltip {
    position: absolute;
    right: 17px;
    bottom: 40px;
    padding: 2px 6px;
    border: 1px solid #767676;
    background: #fff;
    box-shadow: 3px 3px 3px rgba(0, 0, 0, 0.4);
    color: #575757;
    line-height: 15px;
    white-space: nowrap;
}

.tooltip p + p {
    margin-top: 15px;
}
```
